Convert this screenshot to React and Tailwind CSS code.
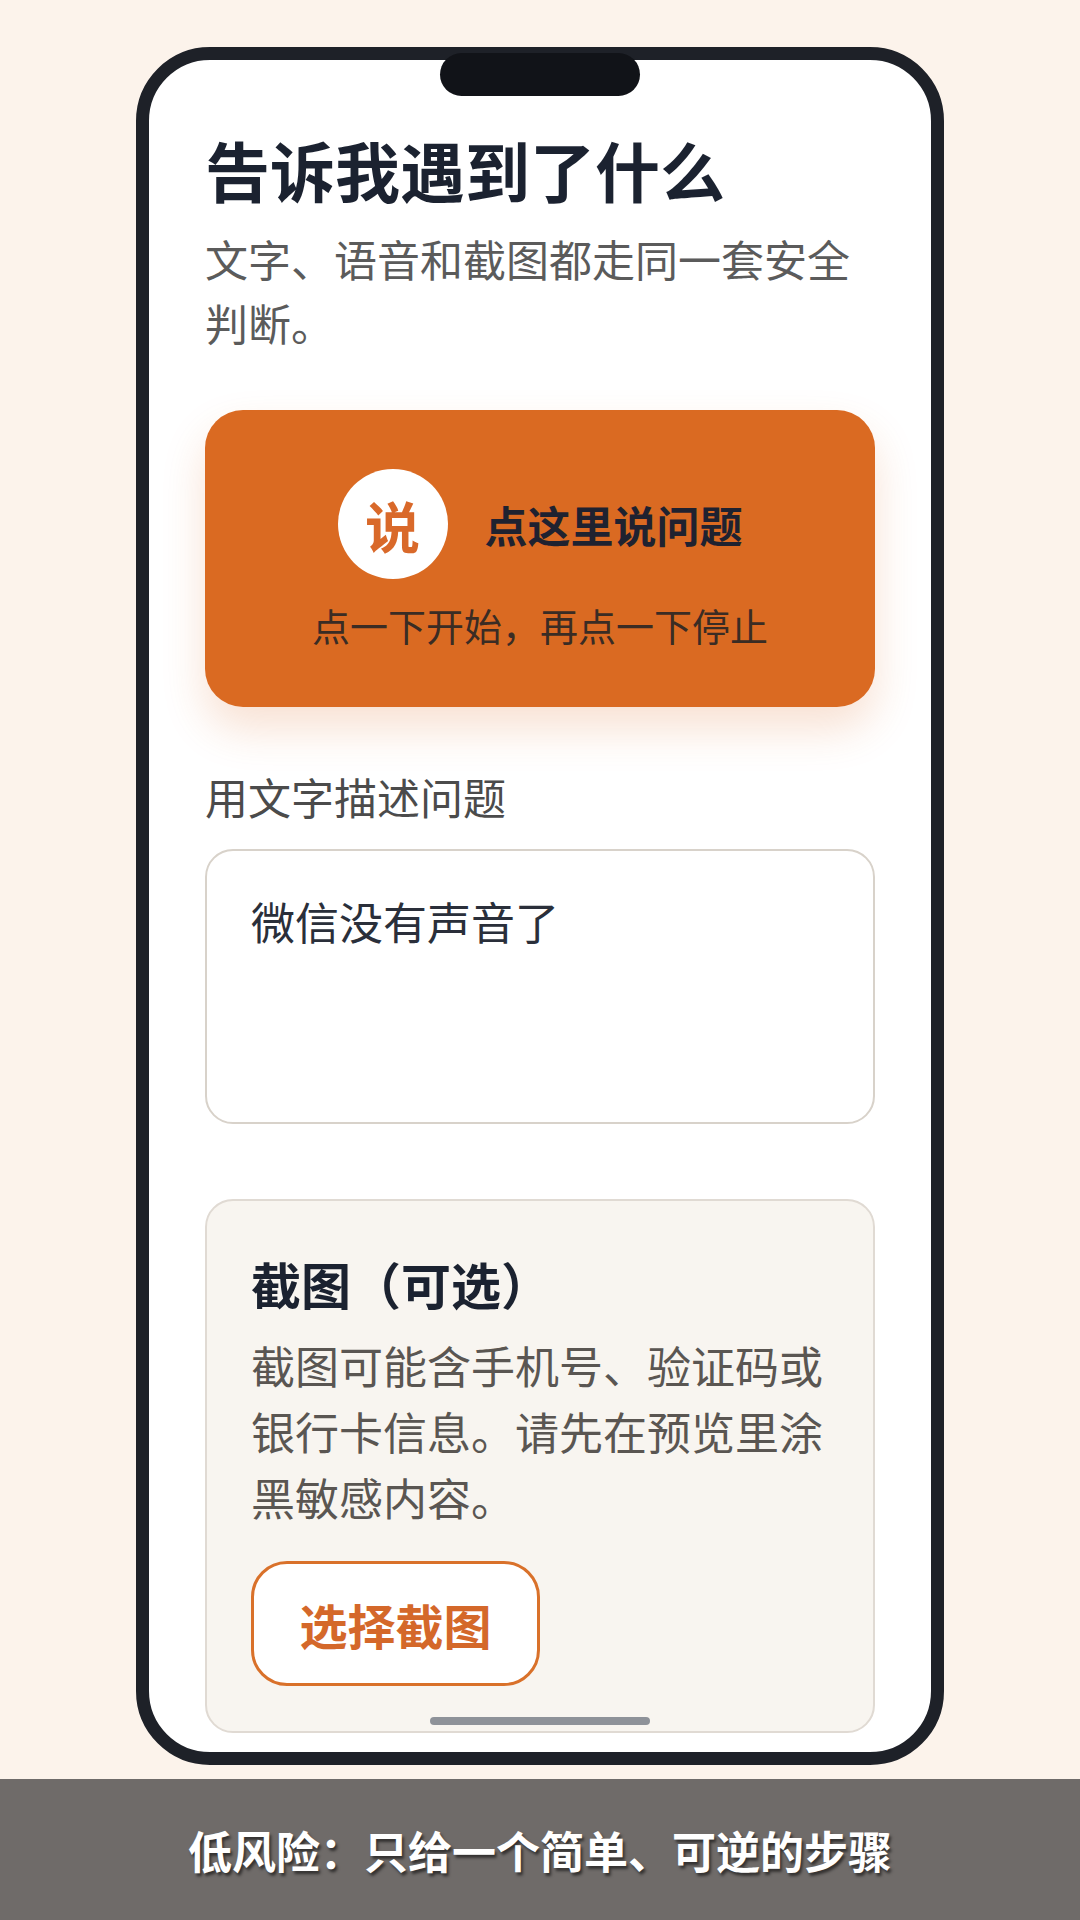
import React from "react";

const font = { fontFamily: '"Noto Sans CJK SC", "Noto Sans", sans-serif' };

function PhoneScreen() {
  return (
    <div className="relative w-[808px] h-[1718px] rounded-[74px] border-[13px] border-[#1e2128] bg-white">
      {/* notch */}
      <div className="absolute top-[-7px] left-1/2 -translate-x-1/2 w-[200px] h-[43px] rounded-full bg-[#111318]" />

      <div className="px-[56px] pt-[71px]">
        <h1 className="text-[65px] font-bold leading-[77px] text-[#1b2230]">告诉我遇到了什么</h1>
        <p className="mt-[18px] text-[43px] leading-[64px] text-[#5b5b5b]">
          文字、语音和截图都走同一套安全判断。
        </p>

        {/* voice button */}
        <div className="mt-[56px] h-[297px] rounded-[38px] bg-[#da6a22] shadow-[0_22px_44px_rgba(218,106,34,0.2)] flex flex-col items-center justify-center gap-[23px]">
          <div className="flex items-center gap-[37px]">
            <div className="w-[110px] h-[110px] rounded-full bg-white flex items-center justify-center text-[55px] font-bold text-[#d9692a]">
              说
            </div>
            <span className="text-[43px] font-bold text-[#1f2230]">点这里说问题</span>
          </div>
          <span className="text-[38px] leading-[46px] text-[#3a2c24]">点一下开始，再点一下停止</span>
        </div>

        <div className="mt-[59px] text-[43px] leading-[60px] text-[#4b4b4b]">用文字描述问题</div>
        <div className="mt-[23px] h-[275px] rounded-[28px] border-2 border-[#d8d2ca] bg-white pl-[44px] pt-[40px] text-[44px] leading-[60px] text-[#2a2f3a]">
          微信没有声音了
        </div>

        {/* screenshot card */}
        <div className="mt-[75px] rounded-[28px] border-2 border-[#e0dad3] bg-[#f8f5f0] pl-[44px] pr-[28px] pt-[52px] pb-[45px]">
          <div className="text-[50px] font-bold leading-[60px] text-[#1b2230]">截图（可选）</div>
          <p className="mt-[19px] text-[44px] leading-[66px] text-[#5a5652]">
            截图可能含手机号、验证码或银行卡信息。请先在预览里涂黑敏感内容。
          </p>
          <button className="mt-[31px] w-[289px] h-[125px] rounded-[36px] border-[3px] border-[#d9712a] bg-white text-[48px] font-bold text-[#d4682a]">
            选择截图
          </button>
        </div>
      </div>

      {/* home indicator */}
      <div className="absolute bottom-[27px] left-1/2 -translate-x-1/2 w-[220px] h-[8px] rounded-full bg-[#8e9299]" />
    </div>
  );
}

export default function App() {
  return (
    <div className="w-[1080px] h-[1920px] flex flex-col" style={font}>
      <div className="h-[1779px] bg-[#fcf3eb] pt-[47px] pl-[136px]">
        <PhoneScreen />
      </div>
      <div className="flex-1 bg-[#6f6b69] flex items-center justify-center">
        <span className="text-[44px] font-bold text-white [text-shadow:2px_3px_3px_rgba(0,0,0,0.55)]">
          低风险：只给一个简单、可逆的步骤
        </span>
      </div>
    </div>
  );
}
